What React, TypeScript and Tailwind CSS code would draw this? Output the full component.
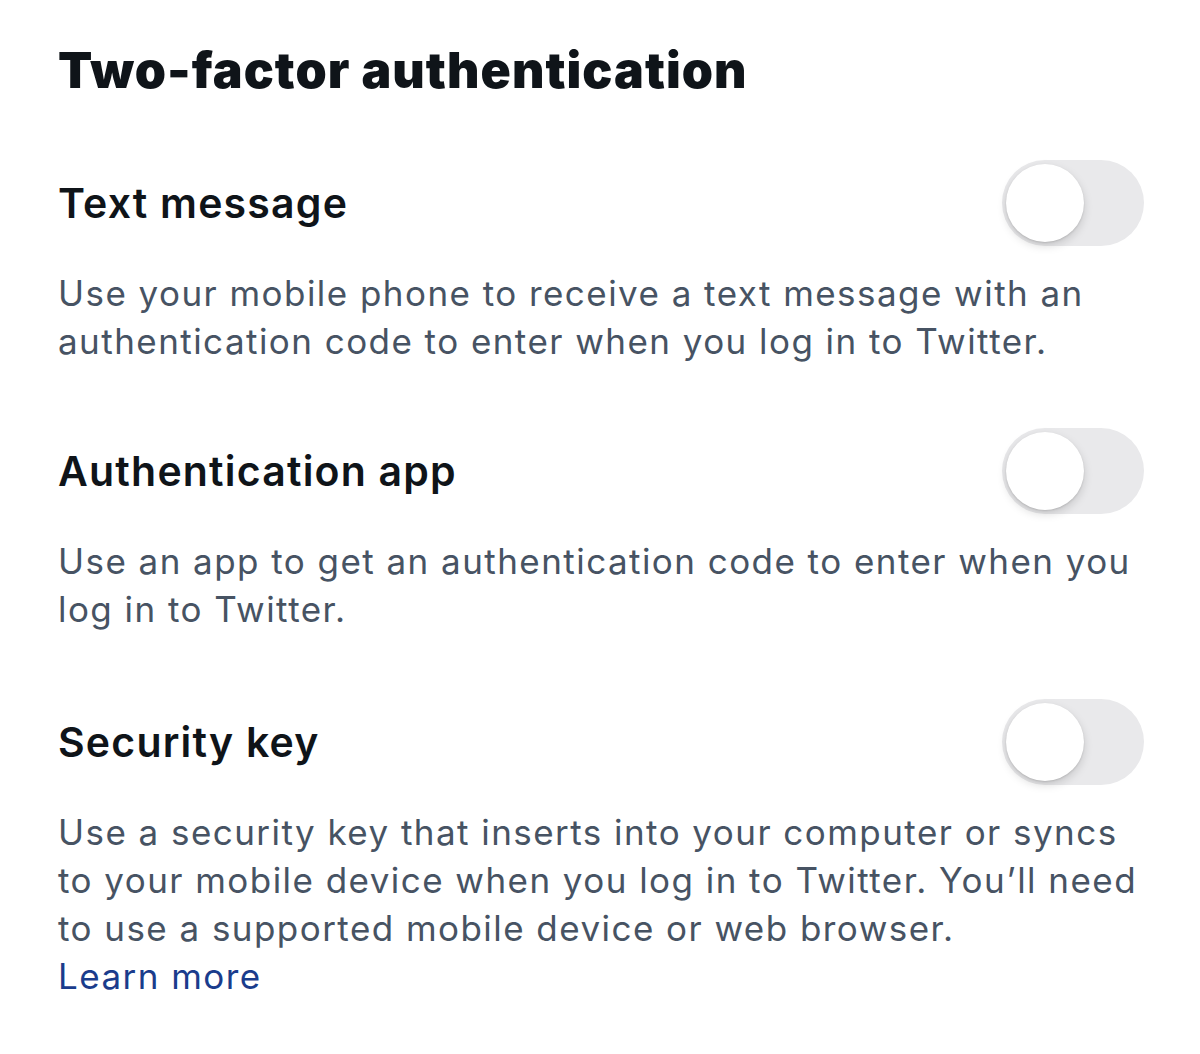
const sections = [
  {
    title: 'Text message',
    body: 'Use your mobile phone to receive a text message with an authentication code to enter when you log in to Twitter.',
    gap: 'mt-[60px]',
  },
  {
    title: 'Authentication app',
    body: 'Use an app to get an authentication code to enter when you log in to Twitter.',
    gap: 'mt-[63px]',
  },
  {
    title: 'Security key',
    body: 'Use a security key that inserts into your computer or syncs to your mobile device when you log in to Twitter. You\u2019ll need to use a supported mobile device or web browser.',
    gap: 'mt-[66px]',
    link: 'Learn more',
  },
];

function Toggle() {
  return (
    <div className="flex h-[86px] w-[142px] shrink-0 items-center rounded-full bg-[#e9e9eb] px-[4px]">
      <div className="h-[78px] w-[78px] rounded-full bg-white shadow-[0_4px_10px_rgba(0,0,0,0.15),0_1px_2px_rgba(0,0,0,0.12)]" />
    </div>
  );
}

export default function App() {
  return (
    <div className="h-[1054px] w-[1200px] bg-white pl-[58px] pr-[56px] pt-[40px] font-['Inter',sans-serif] text-[#0f1419]">
      <h1 className="text-[50px] font-black leading-[60px] tracking-[1.05px]">Two-factor authentication</h1>
      {sections.map((s) => (
        <section key={s.title} className={s.gap}>
          <div className="flex items-center justify-between">
            <h2 className="text-[41px] font-semibold leading-[50px] tracking-[1.2px]">{s.title}</h2>
            <Toggle />
          </div>
          <p className="mt-[23px] text-[35px] leading-[48px] tracking-[1.45px] text-[#475363]">
            {s.body}
            {s.link && (
              <>
                <br />
                <a className="text-[#1a3c8c]">{s.link}</a>
              </>
            )}
          </p>
        </section>
      ))}
    </div>
  );
}
